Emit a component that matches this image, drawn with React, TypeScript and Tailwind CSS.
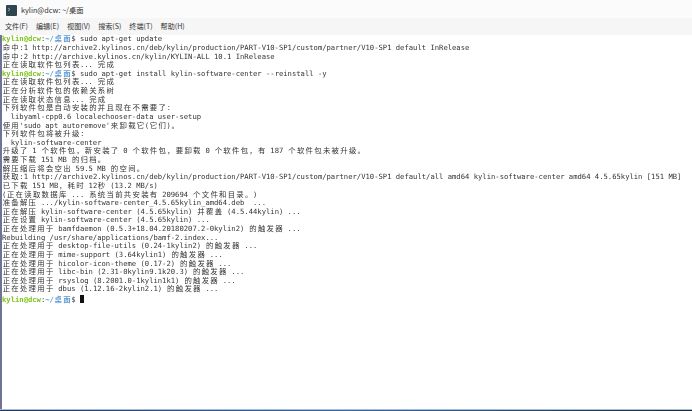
const GREEN = "text-[#7fc31c] font-bold";
const BLUE = "text-[#5f9bd3] font-bold";

const menus = ["文件(F)", "编辑(E)", "视图(V)", "搜索(S)", "终端(T)", "帮助(H)"];

const output: (string | null)[] = [
  null,
  "命中:1 http://archive2.kylinos.cn/deb/kylin/production/PART-V10-SP1/custom/partner/V10-SP1 default InRelease",
  "命中:2 http://archive.kylinos.cn/kylin/KYLIN-ALL 10.1 InRelease",
  "正在读取软件包列表... 完成",
  null,
  "正在读取软件包列表... 完成",
  "正在分析软件包的依赖关系树",
  "正在读取状态信息... 完成",
  "下列软件包是自动安装的并且现在不需要了：",
  "  libyaml-cpp0.6 localechooser-data user-setup",
  "使用'sudo apt autoremove'来卸载它(它们)。",
  "下列软件包将被升级：",
  "  kylin-software-center",
  "升级了 1 个软件包，新安装了 0 个软件包，要卸载 0 个软件包，有 187 个软件包未被升级。",
  "需要下载 151 MB 的归档。",
  "解压缩后将会空出 59.5 MB 的空间。",
  "获取:1 http://archive2.kylinos.cn/deb/kylin/production/PART-V10-SP1/custom/partner/V10-SP1 default/all amd64 kylin-software-center amd64 4.5.65kylin [151 MB]",
  "已下载 151 MB，耗时 12秒 (13.2 MB/s)",
  "(正在读取数据库 ... 系统当前共安装有 209694 个文件和目录。)",
  "准备解压 .../kylin-software-center_4.5.65kylin_amd64.deb  ...",
  "正在解压 kylin-software-center (4.5.65kylin) 并覆盖 (4.5.44kylin) ...",
  "正在设置 kylin-software-center (4.5.65kylin) ...",
  "正在处理用于 bamfdaemon (0.5.3+18.04.20180207.2-0kylin2) 的触发器 ...",
  "Rebuilding /usr/share/applications/bamf-2.index...",
  "正在处理用于 desktop-file-utils (0.24-1kylin2) 的触发器 ...",
  "正在处理用于 mime-support (3.64kylin1) 的触发器 ...",
  "正在处理用于 hicolor-icon-theme (0.17-2) 的触发器 ...",
  "正在处理用于 libc-bin (2.31-0kylin9.1k20.3) 的触发器 ...",
  "正在处理用于 rsyslog (8.2001.0-1kylin1k1) 的触发器 ...",
  "正在处理用于 dbus (1.12.16-2kylin2.1) 的触发器 ...",
];

// terminal grid: wide characters take two cells
const TermText = ({ text }: { text: string }) => (
  <>
    {text.split(/([^\x00-\x7f])/).map((part, i) =>
      i % 2 === 1 ? (
        <span key={i} className="inline-block w-[8.66px] text-center text-[7.4px] leading-[8px]">
          {part}
        </span>
      ) : (
        <span key={i}>{part}</span>
      )
    )}
  </>
);

const Prompt = ({ command, cursor }: { command?: string; cursor?: boolean }) => (
  <div className="h-[8.64px] whitespace-pre">
    <span className={GREEN}>kylin@dcw</span>
    <span>:</span>
    <span className={BLUE}>
      <TermText text="~/桌面" />
    </span>
    <span>$ </span>
    {command && <span>{command}</span>}
    {cursor && <span className="inline-block h-[8px] w-[4.3px] translate-y-[1px] bg-[#111]" />}
  </div>
);

const commands = ["sudo apt-get update", "sudo apt-get install kylin-software-center --reinstall -y"];

export default function App() {
  let cmd = 0;
  return (
    <div className="flex h-[411px] w-[692px] flex-col overflow-hidden bg-white font-['Noto_Sans_CJK_SC','Noto_Sans',sans-serif]">
      <div className="flex h-[18px] items-center gap-[4px] bg-[#fbfbfb] pl-[6px] pt-[2px]">
        <svg width="11" height="11" viewBox="0 0 11 11">
          <rect width="11" height="11" rx="1" fill="#2f4650" />
          <path d="M2 3l2 1.5L2 6" stroke="#9fc0c8" strokeWidth="0.8" fill="none" />
        </svg>
        <span className="text-[7.3px] text-[#333]">kylin@dcw: ~/桌面</span>
      </div>
      <div className="flex h-[17px] items-center gap-[8px] bg-[#f6f6f6] pl-[5px] text-[7.1px] text-[#333]">
        {menus.map((m) => (
          <span key={m}>{m}</span>
        ))}
      </div>
      <div className="flex-1 border-l-2 border-[#6f7396] pt-[0.3px] font-['DejaVu_Sans_Mono','Noto_Sans_CJK_SC',monospace] text-[7.2px] leading-[8.64px] text-[#333] blur-[0.3px]">
        {output.map((line, i) =>
          line === null ? (
            <Prompt key={i} command={commands[cmd++]} />
          ) : (
            <div key={i} className="h-[8.64px] whitespace-pre">
              <TermText text={line} />
            </div>
          )
        )}
        <Prompt cursor />
      </div>
      <div className="h-[1px] bg-[#a9bdd6]" />
      <div className="h-[1px] bg-gradient-to-r from-[#26365c] via-[#3a6aa8] to-[#1c2c34]" />
    </div>
  );
}
